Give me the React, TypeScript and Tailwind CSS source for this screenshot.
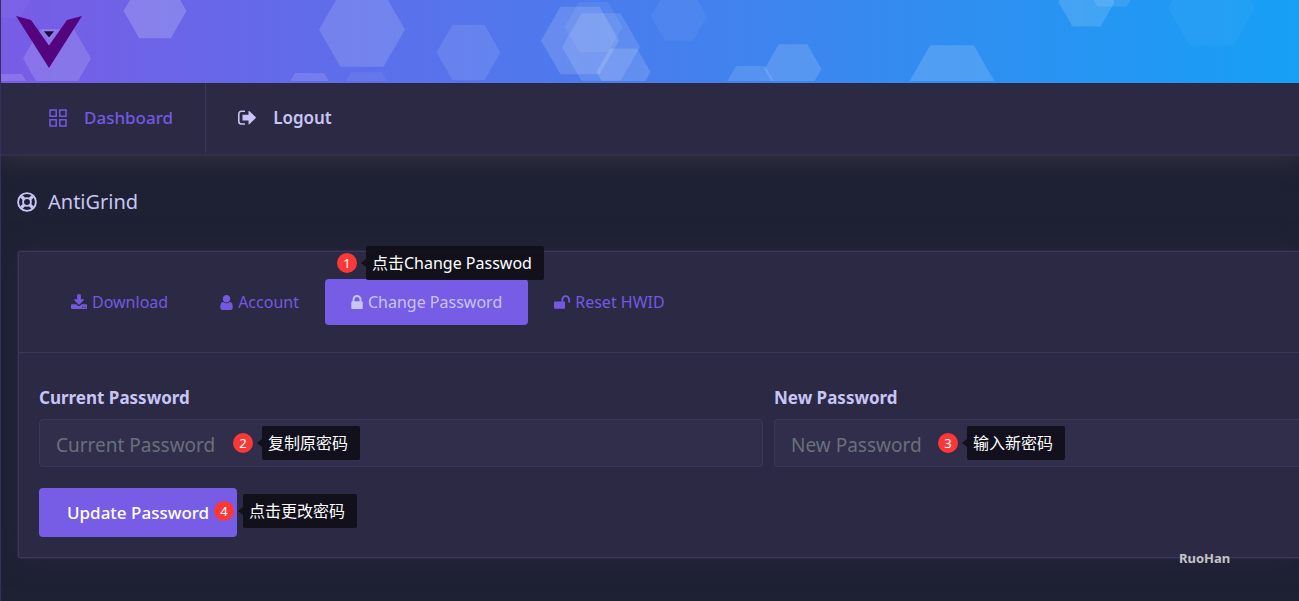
import React from 'react';

const hexagons: [number, number, number, number][] = [
  [5, -8, 30, 0.03],
  [9, 96.5, 26, 0.14],
  [57, 58.5, 34, 0.14],
  [155, 11, 31.5, 0.19],
  [362, 29.5, 43, 0.14],
  [309.5, 98, 29, 0.12],
  [366.5, 99, 31, 0.06],
  [468.5, 52.5, 32, 0.1],
  [580, 40.5, 39, 0.14],
  [593.5, 27, 29, 0.07],
  [601, 47, 39, 0.12],
  [623.5, 72, 27, 0.14],
  [679, 16.5, 28, 0.05],
  [750.5, 91, 29, 0.12],
  [793, 69, 28.5, 0.14],
  [952, 83, 43.5, 0.15],
  [1086.5, 2.3, 28, 0.14],
  [1112, -18.5, 29, 0.1],
  [1211.5, 8, 43.5, 0.04],
];

function hexPoints(cx: number, cy: number, r: number) {
  const h = r * 0.866;
  return `${cx - r},${cy} ${cx - r / 2},${cy - h} ${cx + r / 2},${cy - h} ${cx + r},${cy} ${cx + r / 2},${cy + h} ${cx - r / 2},${cy + h}`;
}

const icons = {
  download:
    'M1344 1344q0-26-19-45t-45-19-45 19-19 45 19 45 45 19 45-19 19-45zm256 0q0-26-19-45t-45-19-45 19-19 45 19 45 45 19 45-19 19-45zm128-224v320q0 40-28 68t-68 28h-1472q-40 0-68-28t-28-68v-320q0-40 28-68t68-28h465l135 136q58 56 136 56t136-56l136-136h464q40 0 68 28t28 68zm-325-569q17 41-14 70l-448 448q-18 19-45 19t-45-19l-448-448q-31-29-14-70 17-39 59-39h256v-448q0-26 19-45t45-19h256q26 0 45 19t19 45v448h256q42 0 59 39z',
  user: 'M1536 1399q0 109-62.5 187t-150.5 78h-854q-88 0-150.5-78t-62.5-187q0-85 8.5-160.5t31.5-152 58.5-131 94-89 134.5-34.5q131 128 313 128t313-128q76 0 134.5 34.5t94 89 58.5 131 31.5 152 8.5 160.5zm-256-887q0 159-112.5 271.5t-271.5 112.5-271.5-112.5-112.5-271.5 112.5-271.5 271.5-112.5 271.5 112.5 112.5 271.5z',
  lock: 'M640 768h512v-192q0-106-75-181t-181-75-181 75-75 181v192zm832 96v576q0 40-28 68t-68 28h-960q-40 0-68-28t-28-68v-576q0-40 28-68t68-28h32v-192q0-184 132-316t316-132 316 132 132 316v192h32q40 0 68 28t28 68z',
  unlock:
    'M1728 576v256q0 26-19 45t-45 19h-64q-26 0-45-19t-19-45v-256q0-106-75-181t-181-75-181 75-75 181v192h96q40 0 68 28t28 68v576q0 40-28 68t-68 28h-960q-40 0-68-28t-28-68v-576q0-40 28-68t68-28h672v-192q0-185 131.5-316.5t316.5-131.5 316.5 131.5 131.5 316.5z',
};

function Glyph({ d, viewBox, className }: { d: string; viewBox: string; className: string }) {
  return (
    <svg viewBox={viewBox} className={`${className} shrink-0 fill-current`} aria-hidden="true">
      <path d={d} />
    </svg>
  );
}

function Note({ n, text, className }: { n: number; text: string; className: string }) {
  return (
    <div className={`absolute z-10 flex items-center ${className}`}>
      <span className="flex size-5 items-center justify-center rounded-full bg-[#fb3838] text-[13px] leading-5 text-white">
        {n}
      </span>
      <span className="ml-1 border-y-4 border-r-5 border-y-transparent border-r-[#12111b]" />
      <span className="rounded-xs bg-[#100f19]/95 py-1 pr-3 pl-1.5 text-base leading-[26px] font-normal whitespace-nowrap text-white">
        {text}
      </span>
    </div>
  );
}

function Field({ id, label, note, inputClass }: { id: string; label: string; note: React.ReactNode; inputClass: string }) {
  return (
    <div>
      <label htmlFor={id} className="block text-[17px] leading-6 font-bold text-[#c8c5f4]">
        {label}
      </label>
      <div className="relative mt-[9px]">
        <input
          id={id}
          type="password"
          placeholder={label}
          className={`block h-12 w-full border border-[#3a3858] bg-[#302e4a] px-4 pt-1 text-[19px] text-[#c8c5f4] outline-none placeholder:text-[#69707c] ${inputClass}`}
        />
        {note}
      </div>
    </div>
  );
}

export default function App() {
  return (
    <div className="min-h-screen overflow-hidden border-l border-[#33315a] bg-[#1e2033] font-['Noto_Sans','Noto_Sans_CJK_SC',sans-serif]">
      <header className="relative z-10 h-[83px] overflow-hidden bg-linear-to-r/srgb from-[#785ce6] to-[#16a0f5]">
        <svg width="1299" height="81" viewBox="1 0 1299 81" className="block max-w-none" aria-hidden="true">
          {hexagons.map(([x, y, r, o]) => (
            <polygon key={`${x}-${y}`} points={hexPoints(x, y, r)} fill="#fff" fillOpacity={o} />
          ))}
          <path d="M16 16 L31 20 L49 45.5 L67 20 L82 16 L49 68 Z" fill="#55047f" />
          <path d="M42.5 30.7 H55.5 L49 38.3 Z" fill="#22083f" stroke="#8d83ea" strokeWidth="1.2" />
        </svg>
      </header>

      <nav className="relative flex h-[73px] items-start border-b-2 border-[#302e4a] bg-[#2b2944] shadow-[0_4px_26px_2px_#30303f]">
        <a href="#dashboard" className="flex h-[70px] items-center gap-[17px] border-r border-[#3a3858] pr-8 pl-12 text-[17px] font-medium text-[#7459e0]">
          <svg viewBox="0 0 18 18" className="size-[18px] fill-none stroke-current" strokeWidth="1.5" aria-hidden="true">
            <path d="M1 1h6.2v6.2H1zM10.8 1H17v6.2h-6.2zM1 10.8h6.2V17H1zM10.8 10.8H17V17h-6.2z" />
          </svg>
          Dashboard
        </a>
        <a href="#logout" className="flex h-[70px] items-center gap-[17px] pl-8 text-[17px] font-semibold text-[#c8c5f4]">
          <svg viewBox="0 0 18 16" className="h-4 w-[18px] fill-current" aria-hidden="true">
            <path d="M7 1.2H3.5A2.7 2.7 0 0 0 .8 3.9v7.4A2.7 2.7 0 0 0 3.5 14H7" fill="none" stroke="currentColor" strokeWidth="1.6" />
            <path d="M4.500 4.700h6V1.400q0-1 .8-.4l6.300 6q.6.600 0 1.200l-6.300 6q-.8.600-.8-.4v-3.300h-6z" />
          </svg>
          Logout
        </a>
      </nav>

      <main className="pl-4">
        <h1 className="mt-8 flex h-7 items-center gap-[11px] text-xl text-[#c8c5f4]">
          <svg viewBox="0 0 20 20" className="size-5 fill-none stroke-current" strokeWidth="1.9" aria-hidden="true">
            <circle cx="10" cy="10" r="8.9" />
            <circle cx="10" cy="10" r="3.9" />
            <path d="M4.400 4.400l2.600 2.600M15.600 4.400l-2.600 2.600M4.400 15.600l2.600-2.600M15.600 15.600l-2.600-2.600" strokeWidth="3.200" />
          </svg>
          AntiGrind
        </h1>

        <section className="relative mt-[34px] rounded-l-sm border-y border-l border-[#2b2944] bg-[#2b2944] shadow-[0_0_26px_2px_#24253a]">
          <div className="rounded-l-xs border-y border-l border-[#3a3858]">
            <div className="flex h-[101px] items-center border-b border-[#3a3858] pl-[26px] text-base text-[#7459e0]">
              <button type="button" className="flex h-[46px] items-center gap-[5px] px-[26px]">
                <Glyph d={icons.download} viewBox="64 0 1664 1600" className="h-4 w-4" />
                Download
              </button>
              <button type="button" className="flex h-[46px] items-center gap-[5px] px-[26px]">
                <Glyph d={icons.user} viewBox="256 128 1280 1536" className="h-[15px] w-[13px]" />
                Account
              </button>
              <div className="relative">
                <button type="button" className="flex h-[46px] items-center gap-[5px] rounded-sm bg-[#775ce5] px-[26px] text-[#c8c5f4]">
                  <Glyph d={icons.lock} viewBox="320 128 1152 1408" className="h-[14px] w-3" />
                  Change Password
                </button>
                <Note n={1} text="点击Change Passwod" className="bottom-[45px] left-3" />
              </div>
              <button type="button" className="flex h-[46px] items-center gap-[5px] px-[26px]">
                <Glyph d={icons.unlock} viewBox="64 128 1664 1408" className="h-[14px] w-4" />
                Reset HWID
              </button>
            </div>

            <form className="pt-[33px] pb-5 pl-5" onSubmit={(e) => e.preventDefault()}>
              <div className="grid grid-cols-[724fr_525fr] gap-[11px]">
                <Field
                  id="current-password"
                  label="Current Password"
                  inputClass="rounded-sm"
                  note={<Note n={2} text="复制原密码" className="top-[7px] left-[194px]" />}
                />
                <Field
                  id="new-password"
                  label="New Password"
                  inputClass="rounded-l-sm border-r-0"
                  note={<Note n={3} text="输入新密码" className="top-[7px] left-[164px]" />}
                />
              </div>
              <div className="relative mt-[21px] w-fit">
                <button type="submit" className="flex h-[49px] items-center rounded-sm bg-[#775ce5] px-7 text-[17px] font-medium text-white">
                  Update Password
                </button>
                <Note n={4} text="点击更改密码" className="top-1.5 left-[175px]" />
              </div>
            </form>
          </div>
          <span className="absolute right-[3px] -bottom-3 w-[135px] pl-[18px] text-[13px] leading-6 font-bold text-[#c4c4c8]">
            <span className="absolute top-2.5 left-0 h-px w-full bg-[#2b2944]" />
            <span className="relative">RuoHan</span>
          </span>
        </section>
      </main>
    </div>
  );
}
